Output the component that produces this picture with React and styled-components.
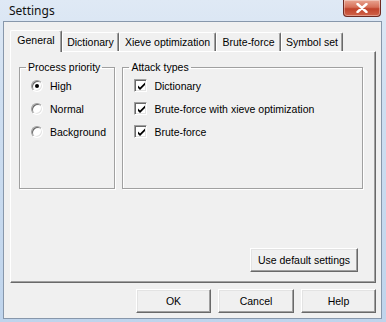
import React from 'react'
import styled, { createGlobalStyle } from 'styled-components'

const Global = createGlobalStyle`
  html, body { margin: 0; padding: 0; background: #c9dbef; }
  body { font-family: "Liberation Sans", Arial, sans-serif; font-size: 10.5px; color: #000; }
`

const tabs = [
  { label: 'General', w: 52 },
  { label: 'Dictionary', w: 57 },
  { label: 'Xieve optimization', w: 97 },
  { label: 'Brute-force', w: 65 },
  { label: 'Symbol set', w: 62 },
]

function Radio({ checked, children }) {
  return (
    <Option>
      <RadioDot $checked={checked} />
      <span>{children}</span>
    </Option>
  )
}

function Check({ children }) {
  return (
    <Option>
      <CheckBox>
        <svg width="9" height="9" viewBox="0 0 9 9">
          <path d="M1 3.5 L3 5.5 L8 0.5 L8 3 L3 8 L1 6 Z" fill="#000" />
        </svg>
      </CheckBox>
      <span>{children}</span>
    </Option>
  )
}

function App() {
  return (
    <>
      <Global />
      <Window>
        <TitleBar>
          <Title>Settings</Title>
          <CloseBtn>
            <svg width="12" height="10" viewBox="0 0 12 10">
              <path d="M1.5 1 L10.5 9 M10.5 1 L1.5 9" stroke="#fff" strokeWidth="2.4" strokeLinecap="round" />
            </svg>
          </CloseBtn>
        </TitleBar>
        <Client>
          <TabControl>
            <TabStrip>
              {tabs.map((t, i) => (
                <Tab key={t.label} $w={t.w} $active={i === 0}>{t.label}</Tab>
              ))}
            </TabStrip>
            <Panel>
              <Groups>
                <Group $w={97}>
                  <Legend>Process priority</Legend>
                  <OptionList>
                    <Radio checked>High</Radio>
                    <Radio>Normal</Radio>
                    <Radio>Background</Radio>
                  </OptionList>
                </Group>
                <Group $w={242}>
                  <Legend>Attack types</Legend>
                  <OptionList>
                    <Check>Dictionary</Check>
                    <Check>Brute-force with xieve optimization</Check>
                    <Check>Brute-force</Check>
                  </OptionList>
                </Group>
              </Groups>
              <PanelFooter>
                <Button $w={108}>Use default settings</Button>
              </PanelFooter>
            </Panel>
          </TabControl>
          <ButtonRow>
            <Button $w={75}>OK</Button>
            <Button $w={76}>Cancel</Button>
            <Button $w={75}>Help</Button>
          </ButtonRow>
        </Client>
      </Window>
    </>
  )
}

const Window = styled.div`
  width: 386px;
  height: 322px;
  box-sizing: border-box;
  display: flex;
  flex-direction: column;
  padding: 0 4px 3px 3px;
  background: linear-gradient(180deg, #dfe9f5 0%, #cfdff1 30%, #bfd4ec 100%);
`

const TitleBar = styled.div`
  height: 22px;
  display: flex;
  align-items: flex-start;
  justify-content: space-between;
`

const Title = styled.div`
  font-family: "Noto Sans", "Open Sans", sans-serif;
  font-size: 12px;
  padding: 2px 0 0 6px;
  color: #111;
`

const CloseBtn = styled.div`
  width: 38px;
  height: 17px;
  margin-right: 1px;
  box-sizing: border-box;
  border: 1px solid #6e2a22;
  border-top: none;
  border-radius: 0 0 4px 4px;
  background: linear-gradient(180deg, #e9a592 0%, #d66f58 45%, #c0432b 55%, #d0634a 100%);
  box-shadow: inset 0 0 0 1px rgba(255,255,255,0.35);
  display: flex;
  align-items: center;
  justify-content: center;
`

const Client = styled.div`
  flex: 1;
  box-sizing: border-box;
  background: #f0f0f0;
  border: 1px solid #8797ab;
  padding: 8px 4px 5px 6px;
  display: flex;
  flex-direction: column;
`

const TabControl = styled.div`
  display: flex;
  flex-direction: column;
  margin-right: 1px;
`

const TabStrip = styled.div`
  display: flex;
  align-items: flex-end;
  height: 21px;
  position: relative;
  z-index: 1;
`

const Tab = styled.div`
  width: ${p => p.$w}px;
  height: ${p => (p.$active ? 22 : 19)}px;
  box-sizing: border-box;
  display: flex;
  align-items: center;
  justify-content: center;
  padding-bottom: ${p => (p.$active ? 3 : 0)}px;
  background: #f0f0f0;
  border-top: 1px solid #fff;
  border-left: 1px solid #fff;
  border-right: 1px solid #696969;
  border-radius: 2px 2px 0 0;
  box-shadow: inset -1px 0 0 #a0a0a0;
  margin-bottom: ${p => (p.$active ? -1 : 0)}px;
`

const Panel = styled.div`
  height: 232px;
  box-sizing: border-box;
  border: 1px solid;
  border-color: #fff #696969 #696969 #fff;
  box-shadow: inset -1px -1px 0 #a0a0a0;
  display: flex;
  flex-direction: column;
  justify-content: space-between;
  padding: 9px 12px 10px 8px;
`

const Groups = styled.div`
  display: flex;
  gap: 7px;
`

const Group = styled.fieldset`
  width: ${p => p.$w}px;
  height: 128px;
  box-sizing: border-box;
  margin: 0;
  padding: 5px 0 0 0;
  border: 1px solid #a0a0a0;
  box-shadow: inset 1px 1px 0 #fff, 1px 1px 0 #fff;
  min-width: 0;
`

const Legend = styled.legend`
  padding: 0 2px;
  margin-left: 6px;
  line-height: 13px;
`

const OptionList = styled.div`
  display: flex;
  flex-direction: column;
  gap: 10px;
  padding-left: 11px;
`

const Option = styled.div`
  display: flex;
  align-items: center;
  gap: 7px;
  height: 13px;
  white-space: nowrap;
`

const RadioDot = styled.span`
  width: 12px;
  height: 12px;
  box-sizing: border-box;
  border-radius: 50%;
  border: 1px solid;
  border-color: #a0a0a0 #fff #fff #a0a0a0;
  background: #fff;
  box-shadow: inset 1px 1px 0 #696969, inset -1px -1px 0 #e3e3e3;
  position: relative;
  &::after {
    content: '';
    display: ${p => (p.$checked ? 'block' : 'none')};
    position: absolute;
    left: 3px;
    top: 3px;
    width: 4px;
    height: 4px;
    border-radius: 50%;
    background: #000;
  }
`

const CheckBox = styled.span`
  width: 13px;
  height: 13px;
  box-sizing: border-box;
  border: 1px solid;
  border-color: #a0a0a0 #fff #fff #a0a0a0;
  background: #fff;
  box-shadow: inset 1px 1px 0 #696969, inset -1px -1px 0 #e3e3e3;
  display: flex;
  align-items: center;
  justify-content: center;
  padding: 1px 0 0 1px;
`

const PanelFooter = styled.div`
  display: flex;
  justify-content: flex-end;
  padding-right: 5px;
`

const Button = styled.div`
  width: ${p => p.$w}px;
  height: 24px;
  box-sizing: border-box;
  display: flex;
  align-items: center;
  justify-content: center;
  background: #f0f0f0;
  border: 1px solid;
  border-color: #fff #696969 #696969 #fff;
  box-shadow: inset -1px -1px 0 #a0a0a0, inset 1px 1px 0 #e3e3e3;
`

const ButtonRow = styled.div`
  display: flex;
  justify-content: flex-end;
  gap: 7px;
  margin-top: 6px;
  padding-right: 1px;
`

export default App
